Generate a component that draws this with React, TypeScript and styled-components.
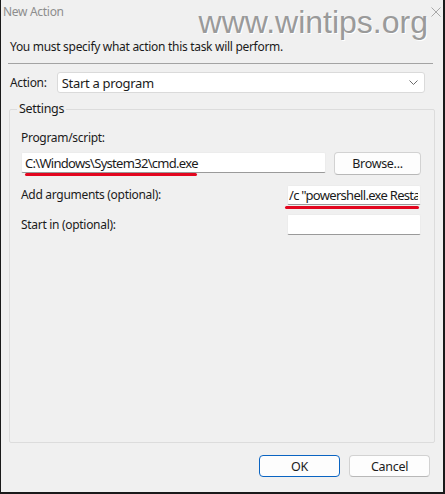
import React from 'react';
import styled, { createGlobalStyle } from 'styled-components';

const GlobalStyle = createGlobalStyle`
  html, body {
    margin: 0;
    padding: 0;
    background: #ffffff;
  }
`;

const Window = styled.div`
  width: 445px;
  height: 494px;
  box-sizing: border-box;
  background: #f0f0f0;
  border-left: 1px solid #1a1a1a;
  border-right: 2px solid #1a1a1a;
  border-bottom: 2px solid #1a1a1a;
  display: flex;
  flex-direction: column;
  font-family: "Noto Sans", "Open Sans", sans-serif;
  font-size: 12px;
  letter-spacing: -0.3px;
  color: #1b1b1b;
  overflow: hidden;
`;

const TitleBar = styled.div`
  height: 36px;
  display: flex;
  align-items: flex-start;
`;

const Title = styled.div`
  padding: 3px 0 0 2px;
  line-height: 18px;
  color: #8d8d8d;
`;

const Watermark = styled.div`
  margin: 6px 0 0 auto;
  font-family: "Liberation Sans", Arial, sans-serif;
  font-size: 32px;
  line-height: 32px;
  letter-spacing: 0;
  color: #9a9a9a;
  text-shadow: 1px 1px 0 #ffffff;
`;

const CloseIcon = styled.svg`
  margin: 7px 2px 0 3px;
  flex: none;
`;

const Message = styled.div`
  padding-left: 9px;
  line-height: 22px;
`;

const Separator = styled.div`
  margin: 5px 10px 0 7px;
  height: 1px;
  background: #a3a3a3;
`;

const ActionRow = styled.div`
  margin: 8px 18px 0 9px;
  display: flex;
  align-items: center;
  gap: 10px;
`;

const Select = styled.div`
  flex: 1;
  height: 21px;
  box-sizing: border-box;
  background: #ffffff;
  border: 1px solid #dadada;
  border-radius: 3px;
  display: flex;
  align-items: center;
  padding: 0 6px 0 4px;
  font-size: 13px;
`;

const SelectText = styled.span`
  flex: 1;
`;

const Group = styled.fieldset`
  flex: 1;
  min-height: 0;
  margin: 8px 8px 0 8px;
  padding: 0 13px 0 11px;
  border: 1px solid #dcdcdc;
  border-radius: 2px;
`;

const Legend = styled.legend`
  margin-left: -4px;
  padding: 0 2px;
  line-height: 16px;
  font-size: 12.5px;
`;

const Fields = styled.div`
  padding-top: 13px;
  display: flex;
  flex-direction: column;
`;

const Label = styled.div`
  line-height: 16px;
`;

const ProgramRow = styled.div`
  margin-top: 6px;
  display: flex;
  align-items: flex-start;
  gap: 8px;
`;

const OptionRow = styled.div<{ $top: number }>`
  margin-top: ${p => p.$top}px;
  display: flex;
  align-items: center;
  justify-content: space-between;
`;

const Field = styled.div<{ $width: number; $height: number }>`
  position: relative;
  width: ${p => p.$width}px;
  height: ${p => p.$height}px;
  flex: none;
`;

const TextBox = styled.input<{ $pad: number }>`
  width: 100%;
  height: 100%;
  box-sizing: border-box;
  margin: 0;
  padding: 0 2px 0 ${p => p.$pad}px;
  background: #ffffff;
  border: 1px solid #ececec;
  border-bottom: 1px solid #9a9a9a;
  border-radius: 2px;
  font-family: "Noto Sans", "Open Sans", sans-serif;
  font-size: 13px;
  letter-spacing: -0.7px;
  color: #1b1b1b;
  outline: none;
`;

const RedMark = styled.div<{ $left: number; $width: number; $top: number }>`
  position: absolute;
  left: ${p => p.$left}px;
  top: ${p => p.$top}px;
  width: ${p => p.$width}px;
  height: 3px;
  border-radius: 2px;
  background: #e3061f;
`;

const Button = styled.button<{ $primary?: boolean; $width: number; $height: number }>`
  width: ${p => p.$width}px;
  height: ${p => p.$height}px;
  margin: 0;
  padding: 0;
  background: #fdfdfd;
  border: 1px solid ${p => (p.$primary ? '#0a64c2' : '#d2d2d2')};
  border-bottom-color: ${p => (p.$primary ? '#0a64c2' : '#b8b8b8')};
  border-radius: 4px;
  font-family: "Noto Sans", "Open Sans", sans-serif;
  font-size: 12.5px;
  letter-spacing: -0.3px;
  color: #1b1b1b;
`;

const Footer = styled.div`
  display: flex;
  justify-content: flex-end;
  gap: 9px;
  padding: 12px 13px 15px 0;
`;

export default function App() {
  return (
    <>
      <GlobalStyle />
      <Window>
        <TitleBar>
          <Title>New Action</Title>
          <Watermark>www.wintips.org</Watermark>
          <CloseIcon width="10" height="10" viewBox="0 0 10 10">
            <path d="M0.5 0.5 L9.5 9.5 M9.5 0.5 L0.5 9.5" stroke="#a8a8a8" strokeWidth="1" fill="none" />
          </CloseIcon>
        </TitleBar>
        <Message>You must specify what action this task will perform.</Message>
        <Separator />
        <ActionRow>
          <Label>Action:</Label>
          <Select>
            <SelectText>Start a program</SelectText>
            <svg width="9" height="5" viewBox="0 0 9 5">
              <path d="M0.5 0.5 L4.5 4.5 L8.5 0.5" stroke="#6b6b6b" strokeWidth="1" fill="none" />
            </svg>
          </Select>
        </ActionRow>
        <Group>
          <Legend>Settings</Legend>
          <Fields>
            <Label>Program/script:</Label>
            <ProgramRow>
              <Field $width={305} $height={21}>
                <TextBox $pad={3} readOnly value="C:\Windows\System32\cmd.exe" />
                <RedMark $left={4} $width={172} $top={21} />
              </Field>
              <Button $width={87} $height={23}>Browse...</Button>
            </ProgramRow>
            <OptionRow $top={10}>
              <Label>Add arguments (optional):</Label>
              <Field $width={134} $height={20}>
                <TextBox $pad={1} readOnly value={'/c "powershell.exe Restart-Service -Name Spooler"'} />
                <RedMark $left={-2} $width={134} $top={21} />
              </Field>
            </OptionRow>
            <OptionRow $top={9}>
              <Label>Start in (optional):</Label>
              <Field $width={134} $height={21}>
                <TextBox $pad={3} readOnly value="" />
              </Field>
            </OptionRow>
          </Fields>
        </Group>
        <Footer>
          <Button $primary $width={81} $height={22}>OK</Button>
          <Button $width={81} $height={22}>Cancel</Button>
        </Footer>
      </Window>
    </>
  );
}
